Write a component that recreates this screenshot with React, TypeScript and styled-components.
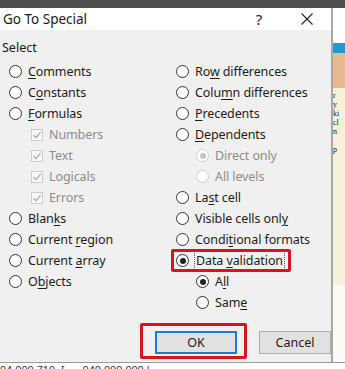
import styled, { createGlobalStyle } from 'styled-components';

const GlobalStyle = createGlobalStyle`
	body {
		margin: 0;
		background: #ffffff;
	}
`;

const font = `"Noto Sans", "Open Sans", sans-serif`;

const Screen = styled.div`
	width: 345px;
	height: 369px;
	overflow: hidden;
	display: flex;
	flex-direction: column;
	font-family: ${font};
	background: #fff;
`;

const TopStrip = styled.div`
	height: 8px;
	flex: none;
	background: #4f4f4f;
`;

const Middle = styled.div`
	height: 354px;
	flex: none;
	display: flex;
`;

const Dialog = styled.div`
	width: 333px;
	flex: none;
	display: flex;
	flex-direction: column;
	background: #f0f0f0;
	border-right: 2px solid #a8a8a8;
	box-sizing: border-box;
`;

const TitleBar = styled.div`
	height: 22px;
	flex: none;
	background: #ffffff;
	display: flex;
	align-items: center;
	padding-left: 3px;
	color: #1b1b1b;
	font-size: 13.5px;
`;

const TitleText = styled.span`
	flex: 1;
`;

const TitleButton = styled.span`
	width: 48px;
	display: flex;
	justify-content: center;
	align-items: center;
	font-size: 15px;
	color: #222;
`;

const Body = styled.div`
	flex: 1;
	display: flex;
	flex-direction: column;
	padding-top: 8px;
`;

const SelectLabel = styled.div`
	font-size: 12.5px;
	color: #1b1b1b;
	padding-left: 2px;
	height: 20px;
	line-height: 20px;
`;

const Columns = styled.div`
	display: grid;
	grid-template-columns: 167px 1fr;
	padding-left: 9px;
	margin-top: 3px;
`;

const Column = styled.div`
	display: flex;
	flex-direction: column;
`;

const Row = styled.div<{ $indent?: number }>`
	height: 21px;
	display: flex;
	align-items: center;
	padding-left: ${p => p.$indent ?? 0}px;
	font-size: 12.5px;
	color: #1d1d1d;
	position: relative;
`;

const Radio = styled.span<{ $checked?: boolean; $disabled?: boolean }>`
	width: 13px;
	height: 13px;
	box-sizing: border-box;
	border-radius: 50%;
	border: 1.5px solid ${p => (p.$disabled ? '#cfcfcf' : '#333')};
	background: #fff;
	margin-right: 6px;
	flex: none;
	display: flex;
	align-items: center;
	justify-content: center;
	&::after {
		content: '';
		width: 6px;
		height: 6px;
		border-radius: 50%;
		background: ${p => (p.$disabled ? '#c4c4c4' : '#222')};
		display: ${p => (p.$checked ? 'block' : 'none')};
	}
`;

const Check = styled.span`
	width: 12px;
	height: 12px;
	box-sizing: border-box;
	border: 1px solid #cdcdcd;
	background: #f7f7f7;
	margin-left: 22px;
	margin-right: 6px;
	flex: none;
	display: flex;
	align-items: center;
	justify-content: center;
`;

const Label = styled.span<{ $disabled?: boolean }>`
	color: ${p => (p.$disabled ? '#8d8d8d' : '#1d1d1d')};
	white-space: nowrap;
	letter-spacing: -0.1px;
	u {
		text-underline-offset: 2px;
	}
`;

const FocusLabel = styled(Label)`
	outline: 1px dotted #555;
	outline-offset: 0px;
	padding: 0 1px;
`;

const RedBox = styled.span<{ $l: number; $t: number; $r: number; $b: number }>`
	position: absolute;
	left: ${p => p.$l}px;
	top: ${p => p.$t}px;
	right: ${p => p.$r}px;
	bottom: ${p => p.$b}px;
	border: 3px solid #d8141f;
	border-radius: 2px;
	pointer-events: none;
`;

const Buttons = styled.div`
	display: flex;
	justify-content: flex-end;
	gap: 22px;
	margin-top: 18px;
`;

const ButtonWrap = styled.div`
	position: relative;
	display: flex;
`;

const Button = styled.button<{ $default?: boolean }>`
	width: ${p => (p.$default ? 82 : 72)}px;
	height: 23px;
	box-sizing: border-box;
	background: #e1e1e1;
	border: ${p => (p.$default ? '2px solid #1f7bd1' : '1px solid #adadad')};
	font-family: ${font};
	font-size: 12.5px;
	color: #1b1b1b;
	padding: 0;
`;

const SideStrip = styled.div`
	flex: 1;
	display: flex;
	flex-direction: column;
	background: #fafafa;
`;

const SideBand = styled.div<{ $h: number; $bg: string }>`
	height: ${p => p.$h}px;
	background: ${p => p.$bg};
	flex: none;
	font-family: "Liberation Serif", serif;
	font-size: 8px;
	line-height: 9px;
	color: #222;
	overflow: hidden;
	padding-top: 3px;
	box-sizing: border-box;
`;

const BottomStrip = styled.div`
	flex: 1;
	overflow: hidden;
	background: #fff;
	border-top: 1px solid #999;
	font-family: "Liberation Sans", sans-serif;
	font-size: 11px;
	line-height: 14px;
	color: #333;
	white-space: pre;
`;

type Item = {
	label: React.ReactNode;
	kind?: 'radio' | 'check' | 'sub';
	checked?: boolean;
	disabled?: boolean;
};

const left: Item[] = [
	{ label: <><u>C</u>omments</> },
	{ label: <>C<u>o</u>nstants</> },
	{ label: <><u>F</u>ormulas</> },
	{ label: 'Numbers', kind: 'check', disabled: true },
	{ label: 'Text', kind: 'check', disabled: true },
	{ label: 'Logicals', kind: 'check', disabled: true },
	{ label: 'Errors', kind: 'check', disabled: true },
	{ label: <>Blan<u>k</u>s</> },
	{ label: <>Current <u>r</u>egion</> },
	{ label: <>Current <u>a</u>rray</> },
	{ label: <>O<u>b</u>jects</> },
];

const right: Item[] = [
	{ label: <>Ro<u>w</u> differences</> },
	{ label: <>Colu<u>m</u>n differences</> },
	{ label: <><u>P</u>recedents</> },
	{ label: <><u>D</u>ependents</> },
	{ label: 'Direct only', kind: 'sub', checked: true, disabled: true },
	{ label: 'All levels', kind: 'sub', disabled: true },
	{ label: <>La<u>s</u>t cell</> },
	{ label: <>Visible cells onl<u>y</u></> },
	{ label: <>Condi<u>t</u>ional formats</> },
];

function Option({ item }: { item: Item }) {
	if (item.kind === 'check') {
		return (
			<Row>
				<Check>
					<svg width="10" height="10" viewBox="0 0 10 10">
						<path d="M1.5 5.2 L4 7.6 L8.6 2.2" fill="none" stroke="#a9a9a9" strokeWidth="1.2" />
					</svg>
				</Check>
				<Label $disabled>{item.label}</Label>
			</Row>
		);
	}
	return (
		<Row $indent={item.kind === 'sub' ? 20 : 0}>
			<Radio $checked={item.checked} $disabled={item.disabled} />
			<Label $disabled={item.disabled}>{item.label}</Label>
		</Row>
	);
}

export default function App() {
	return (
		<>
			<GlobalStyle />
			<Screen>
				<TopStrip />
				<Middle>
					<Dialog>
						<TitleBar>
							<TitleText>Go To Special</TitleText>
							<TitleButton>?</TitleButton>
							<TitleButton>
								<svg width="12" height="12" viewBox="0 0 12 12">
									<path d="M0.5 0.5 L11.5 11.5 M11.5 0.5 L0.5 11.5" stroke="#222" strokeWidth="1.1" />
								</svg>
							</TitleButton>
						</TitleBar>
						<Body>
							<SelectLabel>Select</SelectLabel>
							<Columns>
								<Column>
									{left.map((it, i) => (
										<Option key={i} item={it} />
									))}
								</Column>
								<Column>
									{right.map((it, i) => (
										<Option key={i} item={it} />
									))}
									<Row>
										<Radio $checked />
										<FocusLabel>
											Data <u>v</u>alidation
										</FocusLabel>
										<RedBox $l={-5} $t={-1} $r={40} $b={-1} />
									</Row>
									<Row $indent={20}>
										<Radio $checked />
										<Label>
											A<u>l</u>l
										</Label>
									</Row>
									<Row $indent={20}>
										<Radio />
										<Label>
											Sam<u>e</u>
										</Label>
									</Row>
								</Column>
							</Columns>
							<Buttons>
								<ButtonWrap>
									<Button $default>OK</Button>
									<RedBox $l={-15} $t={-8} $r={-10} $b={-5} />
								</ButtonWrap>
								<ButtonWrap>
									<Button>Cancel</Button>
								</ButtonWrap>
							</Buttons>
						</Body>
					</Dialog>
					<SideStrip>
						<SideBand $h={35} $bg="#ffffff" />
						<SideBand $h={10} $bg="#1e9bd7" />
						<SideBand $h={35} $bg="#e6b98f" />
						<SideBand $h={197} $bg="#f6f1d8">
							r<br />y<br />ki<br />cl<br />n<br /><br />p
						</SideBand>
						<SideBand $h={77} $bg="#fbfaf4" />
					</SideStrip>
				</Middle>
				<BottomStrip>{'04 000 710  [      040 000 000 |'}</BottomStrip>
			</Screen>
		</>
	);
}
